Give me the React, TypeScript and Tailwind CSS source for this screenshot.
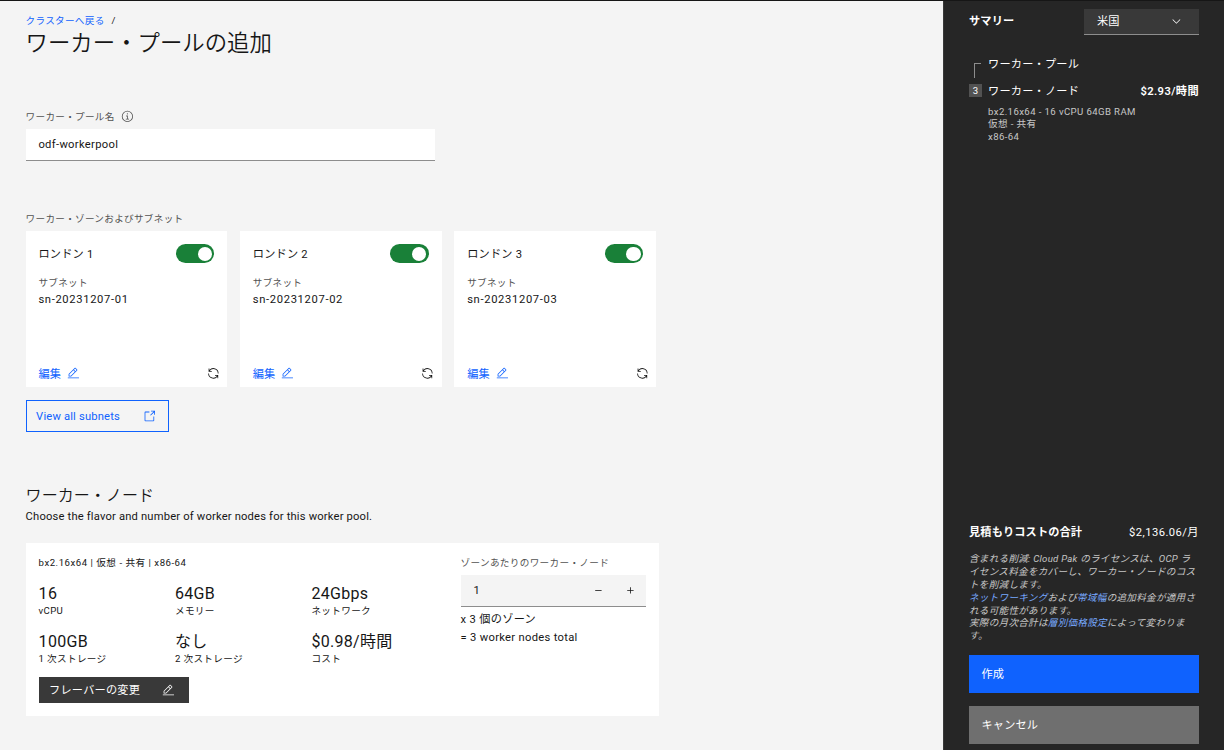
import type { ReactNode } from 'react';
import clsx from 'clsx';

const icons = {
  edit: 'M2 26h28v2H2zM25.4 9c.8-.8.8-2 0-2.8L21.8 2.6c-.8-.8-2-.8-2.8 0l-15 15V24h6.4l15-15zm-5-5L24 7.6l-3 3L17.4 7l3-3zM6 22v-3.6l10-10 3.6 3.6-10 10H6z',
  renew: 'M12 10H6.78A11 11 0 0127 16h2A13 13 0 006 7.68V4H4v8h8zM20 22h5.22A11 11 0 015 16H3a13 13 0 0023 8.32V28h2V20H20z',
  launch: 'M26 28H6a2 2 0 01-2-2V6a2 2 0 012-2h10v2H6v20h20V16h2v10a2 2 0 01-2 2zM20 2v2h6.586L18 12.586 19.414 14 28 5.414V12h2V2z',
  info: 'M17 22v-8h-4v2h2v6h-3v2h8v-2zM16 8a1.5 1.5 0 101.5 1.5A1.5 1.5 0 0016 8zM16 30a14 14 0 1114-14 14 14 0 01-14 14zm0-26a12 12 0 1012 12A12 12 0 0016 4z',
  chevron: 'M16 22L6 12l1.4-1.4 8.6 8.6 8.6-8.6L26 12z',
  add: 'M17 15V8h-2v7H8v2h7v7h2v-7h7v-2z',
  subtract: 'M8 15h16v2H8z',
};

function Icon({ name, className = '' }: { name: keyof typeof icons; className?: string }) {
  return (
    <svg viewBox="0 0 32 32" fill="currentColor" className={clsx('size-[12.8px] shrink-0', className)}>
      <path d={icons[name]} />
    </svg>
  );
}

function Label({ children, className = '' }: { children: ReactNode; className?: string }) {
  return <p className={clsx('text-[9.6px] leading-[14px] tracking-[0.3px] text-[#525252]', className)}>{children}</p>;
}

function Link({ children }: { children: ReactNode }) {
  return <a className="text-[#78a9ff]">{children}</a>;
}

const zones = [
  { name: 'ロンドン 1', subnet: 'sn-20231207-01' },
  { name: 'ロンドン 2', subnet: 'sn-20231207-02' },
  { name: 'ロンドン 3', subnet: 'sn-20231207-03' },
];

const specs = [
  { value: '16', label: 'vCPU' },
  { value: '64GB', label: 'メモリー' },
  { value: '24Gbps', label: 'ネットワーク' },
  { value: '100GB', label: '1 次ストレージ' },
  { value: 'なし', label: '2 次ストレージ' },
  { value: '$0.98/時間', label: 'コスト' },
];

function ZoneCard({ name, subnet }: { name: string; subnet: string }) {
  return (
    <div className="flex h-[156px] w-[201.6px] flex-col bg-white pt-[12.8px] pl-[12.8px]">
      <div className="flex items-center justify-between pr-[12.8px]">
        <span className="pt-0.5 leading-[18px] tracking-[0.2px]">{name}</span>
        <span className="flex h-[19.2px] w-[38.4px] items-center justify-end rounded-full bg-[#198038] pr-[2.4px]">
          <span className="size-[14.4px] rounded-full bg-white" />
        </span>
      </div>
      <Label className="mt-[12px]">サブネット</Label>
      <p className="mt-0.5 leading-4 tracking-[0.66px]">{subnet}</p>
      <div className="mt-auto mb-[5px] flex items-center justify-between pr-[7.4px]">
        <a className="flex items-center gap-[6px] leading-4 text-[#0f62fe]">
          <span className="pt-[3px] leading-[15px]">編集</span>
          <Icon name="edit" />
        </a>
        <Icon name="renew" />
      </div>
    </div>
  );
}

function FlavorCard() {
  return (
    <section className="mt-[18px] flex h-[173px] w-[633px] bg-white pt-[13px] pr-[13px] pl-[13px]">
      <div className="w-[422px]">
        <p className="text-[9.6px] leading-[14px] tracking-[0.52px]">bx2.16x64 | 仮想 - 共有 | x86-64</p>
        <div className="mt-[14px] grid grid-cols-[136.4px_136.4px_148px] gap-y-[11px]">
          {specs.map((s) => (
            <div key={s.label}>
              <p className="text-[16px] leading-5 tracking-[0.3px]">{s.value}</p>
              <p className="-mt-[3px] h-5 text-[9.6px] leading-5 tracking-[0.35px]">{s.label}</p>
            </div>
          ))}
        </div>
        <button className="mt-[8px] flex h-[26px] w-[150px] items-center justify-between bg-[#393939] pr-[14px] pl-[10.5px] tracking-[0.2px] text-white">
          <span className="pt-[2px]">フレーバーの変更</span>
          <Icon name="edit" />
        </button>
      </div>
      <div className="w-[185px]">
        <Label className="tracking-[0.34px]">ゾーンあたりのワーカー・ノード</Label>
        <div className="mt-[5px] flex h-8 items-center border-b border-[#8d8d8d] bg-[#f4f4f4] pr-[9px] pl-[13px]">
          <span className="flex-1 pt-px">1</span>
          <Icon name="subtract" />
          <Icon name="add" className="ml-[19px]" />
        </div>
        <p className="mt-[4px] leading-[18px] tracking-[0.3px]">x 3 個のゾーン</p>
        <p className="leading-[18px] tracking-[0.3px]">= 3 worker nodes total</p>
      </div>
    </section>
  );
}

function Summary() {
  return (
    <aside className="flex w-[281px] flex-col border-l border-[#393939] bg-[#262626] pt-2 pr-[25px] pl-[25px] text-white">
      <div className="flex items-start justify-between">
        <h2 className="pt-px font-semibold leading-6">サマリー</h2>
        <div className="flex h-[26px] w-[115px] items-center justify-between border-b border-[#8d8d8d] bg-[#393939] pr-4 pl-[13px]">
          <span className="pt-[2px]">米国</span>
          <Icon name="chevron" />
        </div>
      </div>

      <div className="mt-[20px] flex">
        <div className="w-[19px]">
          <div className="mt-[8px] ml-[5px] h-[15px] w-[7px] border-t border-l border-[#8d8d8d]" />
          <span className="mt-[6px] flex size-[13px] items-center justify-center bg-[#525252] text-[9.6px] leading-none">3</span>
        </div>
        <div className="flex-1">
          <p className="leading-5 tracking-[0.2px]">ワーカー・プール</p>
          <div className="mt-[7px] flex justify-between leading-5 tracking-[0.2px]">
            <span>ワーカー・ノード</span>
            <span className="font-semibold tracking-[0.4px]">$2.93/時間</span>
          </div>
          <div className="mt-1 text-[9.6px] leading-[12.4px] tracking-[0.4px] text-[#c6c6c6]">
            <p>bx2.16x64 - 16 vCPU 64GB RAM</p>
            <p>仮想 - 共有</p>
            <p>x86-64</p>
          </div>
        </div>
      </div>

      <div className="mt-auto flex justify-between leading-5">
        <span className="font-semibold">見積もりコストの合計</span>
        <span className="tracking-[0.45px]">$2,136.06/月</span>
      </div>
      <div className="mt-[10px] text-[9.6px] italic leading-[12.8px] tracking-[0.256px] text-[#c6c6c6]">
        <p>含まれる削減: Cloud Pak のライセンスは、OCP ライセンス料金をカバーし、ワーカー・ノードのコストを削減します。</p>
        <p>
          <Link>ネットワーキング</Link>および<Link>帯域幅</Link>の追加料金が適用される可能性があります。
        </p>
        <p>
          実際の月次合計は<Link>層別価格設定</Link>によって変わります。
        </p>
      </div>
      <button className="mt-[12px] h-[38px] bg-[#0f62fe] pt-[2px] pl-[12.5px] text-left">作成</button>
      <button className="mt-[13px] mb-[6px] h-[38px] bg-[#6f6f6f] pt-[2px] pl-[12.5px] text-left">キャンセル</button>
    </aside>
  );
}

export default function App() {
  return (
    <div className="flex h-[750px] w-[1224px] overflow-hidden border-t border-[#161616] bg-[#f4f4f4] font-['Roboto','Noto_Sans_CJK_JP',sans-serif] text-[11.2px] tracking-[0.128px] text-[#161616]">
      <main className="flex-1 pt-[13px] pl-[25.6px]">
        <nav className="flex gap-[7px] text-[9.6px] leading-[14px] tracking-[0.3px]">
          <a className="text-[#0f62fe]">クラスターへ戻る</a>
          <span>/</span>
        </nav>
        <h1 className="-mt-px text-[22.4px] leading-8 font-[350] tracking-normal">ワーカー・プールの追加</h1>

        <div className="mt-[50px] flex items-center gap-[6px] text-[#525252]">
          <Label className="pt-px">ワーカー・プール名</Label>
          <Icon name="info" />
        </div>
        <div className="mt-[5px] flex h-8 w-[409px] items-center border-b border-[#8d8d8d] bg-white pt-[2px] pl-[12.8px] tracking-[0.33px]">
          odf-workerpool
        </div>

        <Label className="mt-[51px]">ワーカー・ゾーンおよびサブネット</Label>
        <div className="mt-[5px] flex gap-[12.8px]">
          {zones.map((z) => (
            <ZoneCard key={z.name} {...z} />
          ))}
        </div>
        <button className="mt-[13px] flex h-8 w-[143px] items-center justify-between border border-[#0f62fe] pr-3 pl-[9.5px] tracking-[0.18px] text-[#0f62fe]">
          <span className="pt-[2px]">View all subnets</span>
          <Icon name="launch" />
        </button>

        <h2 className="mt-[52px] text-[16px] leading-6 font-[350] tracking-[0.05px]">ワーカー・ノード</h2>
        <p className="mt-px leading-4 tracking-[0.18px]">Choose the flavor and number of worker nodes for this worker pool.</p>
        <FlavorCard />
      </main>
      <Summary />
    </div>
  );
}
